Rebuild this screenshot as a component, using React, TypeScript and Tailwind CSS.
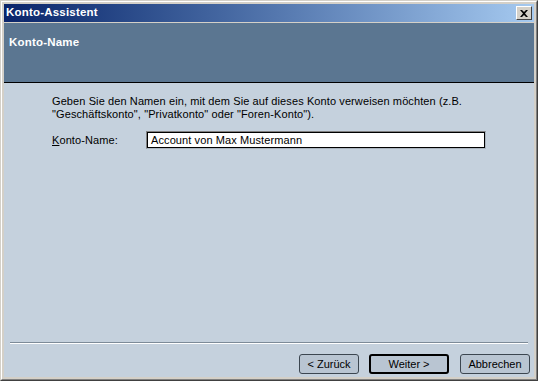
import React from 'react';

const font = { fontFamily: '"Liberation Sans", Arial, sans-serif' };

const CloseButton: React.FC = () => (
  <div className="w-[16px] h-[14px] bg-[#d4d0c8] border border-t-white border-l-white border-r-[#404040] border-b-[#404040] flex items-center justify-center">
    <svg width="8" height="7" viewBox="0 0 8 7">
      <path d="M0 0h2l2 2 2-2h2L5 3.5 8 7H6L4 5 2 7H0l3-3.5z" fill="#000" />
    </svg>
  </div>
);

const WizardButton: React.FC<{ label: string; width: string; isDefault?: boolean; extra?: string }> = ({ label, width, isDefault, extra }) => (
  <button
    className={`${width} ${extra ?? ''} h-[20px] rounded-[3px] bg-[#b9c5d2] text-[11px] text-black flex items-center justify-center ${
      isDefault ? 'border-2 border-black' : 'border border-[#3c4650]'
    }`}
  >
    {label}
  </button>
);

export default function App() {
  return (
    <div className="w-[538px] h-[381px] bg-[#d4d0c8] border border-t-[#d4d0c8] border-l-[#d4d0c8] border-r-[#404040] border-b-[#404040]" style={font}>
      <div className="w-full h-full border border-t-white border-l-white border-r-[#808080] border-b-[#808080] p-[2px] flex flex-col">
        {/* Title bar */}
        <div className="h-[18px] flex items-center justify-between pl-[2px] pr-[2px] bg-gradient-to-r from-[#0a246a] to-[#a6caf0]">
          <span className="text-white font-bold text-[11.5px] tracking-[0.2px]">Konto-Assistent</span>
          <CloseButton />
        </div>
        <div className="h-[1px]" />

        {/* Header panel */}
        <div className="h-[59px] bg-[#5b7691] pl-[5px] pt-[13px] text-white font-bold text-[11.5px] leading-[13px] tracking-[0.2px]">
          Konto-Name
        </div>
        <div className="h-[1px] bg-black" />

        {/* Body */}
        <div className="flex-1 bg-[#c5d1dd] flex flex-col">
          <div className="pl-[48px] pt-[12px] text-[11px] leading-[13px] tracking-[0.1px] text-black">
            <p>Geben Sie den Namen ein, mit dem Sie auf dieses Konto verweisen möchten (z.B.</p>
            <p>"Geschäftskonto", "Privatkonto" oder "Foren-Konto").</p>
          </div>
          <div className="pl-[48px] mt-[10px] flex items-center text-[11px] tracking-[0.1px]">
            <label className="w-[94px]">
              <span className="underline">K</span>onto-Name:
            </label>
            <div className="border border-t-[#808080] border-l-[#808080] border-r-[#aab4be] border-b-[#aab4be]">
              <div className="w-[338px] h-[16px] bg-white border border-black pl-[3px] flex items-center">
                Account von Max Mustermann
              </div>
            </div>
          </div>

          <div className="flex-1" />

          <div className="ml-[6px] mr-[6px] border-t border-t-[#7d8b98] border-b border-b-white" />
          <div className="flex justify-end gap-[10px] pr-[4px] pt-[10px] pb-[3px]">
            <WizardButton label="< Zurück" width="w-[60px]" />
            <WizardButton label="Weiter >" width="w-[80px]" isDefault />
            <WizardButton label="Abbrechen" width="w-[70px]" extra="ml-[1px]" />
          </div>
        </div>
      </div>
    </div>
  );
}
